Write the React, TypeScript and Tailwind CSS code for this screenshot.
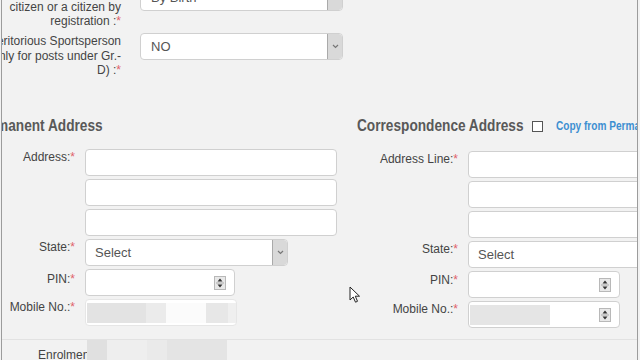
import React from "react";

const lbl = "text-[12px] leading-[14.5px] text-[#444]";
const head = "origin-left scale-x-[0.854] font-['Liberation_Sans',Arial,sans-serif] font-bold text-[16px] leading-[20px] text-[#595959] whitespace-nowrap";

function Req() {
  return <span className="text-[#e0626a]">*</span>;
}

function Field({ className = "", children }: { className?: string; children?: React.ReactNode }) {
  return (
    <div className={`h-[27px] shrink-0 rounded-[4px] border border-[#d0d0d0] bg-white flex items-center overflow-hidden ${className}`}>
      {children}
    </div>
  );
}

function Chevron() {
  return (
    <div className="ml-auto h-full w-[15px] shrink-0 rounded-r-[3px] border-l border-[#aaa] bg-[#d9d9d9] flex items-center justify-center">
      <svg width="7" height="5" viewBox="0 0 7 5">
        <path d="M1 1l2.5 2.5L6 1" fill="none" stroke="#777" strokeWidth="1.2" />
      </svg>
    </div>
  );
}

function Spinner() {
  return (
    <div className="ml-auto mr-[8px] w-[12px] h-[14px] shrink-0 border border-[#b8b8b8] bg-[#e8e8e8] flex items-center justify-center">
      <svg width="10" height="12" viewBox="0 0 10 12">
        <path d="M5 1.5L7.5 4.5h-5z" fill="#333" />
        <path d="M1 6h8" stroke="#aaa" strokeWidth="1" />
        <path d="M5 10.5L7.5 7.5h-5z" fill="#333" />
      </svg>
    </div>
  );
}

function Row({ label, children }: { label?: React.ReactNode; children: React.ReactNode }) {
  return (
    <div className="flex items-start">
      <div className={`w-[101px] shrink-0 pt-[1px] text-right ${lbl}`}>{label}</div>
      <div className="ml-[10px] flex">{children}</div>
    </div>
  );
}

function Blur({ parts }: { parts: [string, string][] }) {
  return (
    <div className="flex h-[20px]">
      {parts.map(([w, c], i) => (
        <div key={i} className={`h-full ${w} ${c}`} />
      ))}
    </div>
  );
}

export default function App() {
  return (
    <div className="w-[640px] h-[360px] overflow-hidden bg-[#f2f2f2] font-['Liberation_Sans',Arial,sans-serif]">
      <div className="relative ml-[1px] w-[637px] h-full border-x border-[#9c9c9c] overflow-hidden">
        <div className="-mt-[16px]">
          <div className="flex items-start">
            <div className={`-ml-[51px] w-[170px] shrink-0 pt-[1px] text-right ${lbl}`}>
              Whether Indian by birth,
              <br />
              citizen or a citizen by
              <br />
              registration :<Req />
            </div>
            <Field className="ml-[19px] w-[203px] pl-[10px] text-[13px] text-[#555]">
              By Birth
              <Chevron />
            </Field>
          </div>
          <div className="mt-[4.5px] flex items-start">
            <div className={`-ml-[51px] w-[170px] shrink-0 pt-[1px] text-right whitespace-nowrap ${lbl}`}>
              Meritorious Sportsperson
              <br />
              (Only for posts under Gr.-
              <br />
              D) :<Req />
            </div>
            <Field className="ml-[19px] w-[203px] pl-[10px] text-[13px] text-[#555]">
              NO
              <Chevron />
            </Field>
          </div>
        </div>

        <div className="mt-[38.5px] -ml-[28px] flex items-start">
          <div className="w-[383px] shrink-0">
            <div className={head}>Permanent Address</div>
            <div className="mt-[13px] flex flex-col gap-[3px]">
              <Row label={<>Address:<Req /></>}>
                <Field className="w-[252px]" />
              </Row>
              <Row>
                <Field className="w-[252px]" />
              </Row>
              <Row>
                <Field className="w-[252px]" />
              </Row>
              <Row label={<>State:<Req /></>}>
                <Field className="w-[203px] pl-[9px] text-[13px] text-[#555]">
                  Select
                  <Chevron />
                </Field>
              </Row>
              <Row label={<span className="relative top-[2px]">PIN:<Req /></span>}>
                <Field className="w-[150px]">
                  <Spinner />
                </Field>
              </Row>
              <Row label={<>Mobile No.:<Req /></>}>
                <Field className="w-[152px] border-[#e6e6e6] pl-[1px]">
                  <Blur
                    parts={[
                      ["w-[59px]", "bg-[#e3e3e3]"],
                      ["w-[20px]", "bg-[#ebebeb]"],
                      ["w-[40px]", "bg-[#fbfbfb]"],
                      ["w-[22px]", "bg-[#e7e7e7]"],
                      ["w-[8px]", "bg-[#efefef]"],
                    ]}
                  />
                </Field>
              </Row>
            </div>
          </div>

          <div className="shrink-0">
            <div className="flex items-center h-[20px]">
              <div className="w-[167px] shrink-0">
                <div className={head}>Correspondence Address</div>
              </div>
              <div className="ml-[8px] w-[11px] h-[11px] shrink-0 border border-[#555] bg-white" />
              <div className="ml-[13px] origin-left scale-x-[0.84] whitespace-nowrap font-['Liberation_Sans',Arial,sans-serif] font-bold text-[12px] text-[#3d8fd1]">
                Copy from Permanent Address
              </div>
            </div>
            <div className="mt-[15px] flex flex-col gap-[3px]">
              <Row label={<>Address Line:<Req /></>}>
                <Field className="w-[252px]" />
              </Row>
              <Row>
                <Field className="w-[252px]" />
              </Row>
              <Row>
                <Field className="w-[252px]" />
              </Row>
              <Row label={<>State:<Req /></>}>
                <Field className="w-[203px] pl-[9px] text-[13px] text-[#555]">
                  Select
                  <Chevron />
                </Field>
              </Row>
              <Row label={<span className="relative top-[1px]">PIN:<Req /></span>}>
                <Field className="w-[152px]">
                  <Spinner />
                </Field>
              </Row>
              <Row label={<>Mobile No.:<Req /></>}>
                <Field className="w-[152px] pl-[1px]">
                  <Blur parts={[["w-[80px]", "bg-[#e5e5e5]"]]} />
                  <Spinner />
                </Field>
              </Row>
            </div>
          </div>
        </div>

        <div className="mt-[11px] border-t border-[#e2e2e2]" />
        <div className="flex items-start">
          <div className={`ml-[36px] w-[49px] shrink-0 overflow-hidden whitespace-nowrap pt-[8px] ${lbl}`}>
            Enrolment No.:
          </div>
          <Blur
            parts={[
              ["w-[20px]", "bg-[#e0e0e0]"],
              ["w-[40px]", "bg-[#eeeeee]"],
              ["w-[20px]", "bg-[#eaeaea]"],
              ["w-[60px]", "bg-[#e4e4e4]"],
            ]}
          />
        </div>

        <svg className="absolute left-[347px] top-[286px]" width="12" height="18" viewBox="0 0 12 18">
          <path d="M1 1v13l3.2-3 2.3 5.2 2-.9-2.2-5.1H10.5z" fill="#fff" stroke="#222" strokeWidth="1" strokeLinejoin="round" />
        </svg>
      </div>
    </div>
  );
}
